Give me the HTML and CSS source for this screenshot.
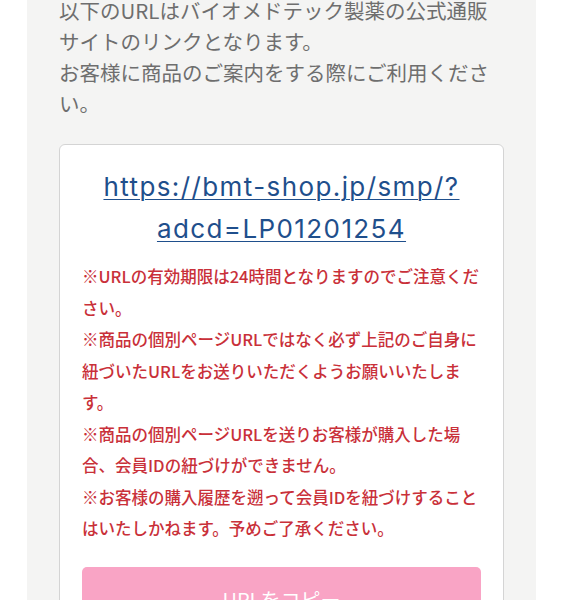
FILE: index.html
```html
<!DOCTYPE html>
<html lang="ja">
<head>
    <meta charset="UTF-8">
    <meta name="viewport" content="width=device-width, initial-scale=1.0">
    <title>URLのご案内</title>
    <link rel="stylesheet" href="styles.css">
</head>
<body>

<div class="panel">
    <div class="intro">
        <p>以下のURLはバイオメドテック製薬の公式通販サイトのリンクとなります。</p>
        <p>お客様に商品のご案内をする際にご利用ください。</p>
    </div>
    <div class="tarjeta">
        <a class="enlace" href="https://bmt-shop.jp/smp/?adcd=LP01201254">https://bmt-shop.jp/smp/?adcd=LP01201254</a>
        <div class="avisos">
            <p>※URLの有効期限は24時間となりますのでご注意ください。</p>
            <p>※商品の個別ページURLではなく必ず上記のご自身に紐づいたURLをお送りいただくようお願いいたします。</p>
            <p>※商品の個別ページURLを送りお客様が購入した場合、会員IDの紐づけができません。</p>
            <p>※お客様の購入履歴を遡って会員IDを紐づけすることはいたしかねます。予めご了承ください。</p>
        </div>
        <button class="boton-copiar" type="button">URLをコピー</button>
    </div>
</div>

</body>
</html>
```

FILE: styles.css
```css
body {
    margin: 0;
    background-color: #ffffff;
    font-family: "Noto Sans CJK JP", "Noto Sans", sans-serif;
}
.panel {
    background-color: #f4f4f3;
    margin: -5px 27px 0 27px;
    padding: 0 32px 40px 32px;
}
.intro p {
    margin: 0;
    font-size: 20.5px;
    line-height: 31px;
    color: #6e6e6e;
}
.tarjeta {
    margin-top: 25px;
    background-color: #ffffff;
    border: 1px solid #d4d4d4;
    border-radius: 6px;
    padding: 21px 22px 30px 22px;
}
.enlace {
    display: block;
    text-align: center;
    font-family: "Inter", "Noto Sans", sans-serif;
    font-size: 26px;
    letter-spacing: 1.4px;
    line-height: 41.5px;
    color: #1f4f8c;
    text-decoration: underline;
    text-decoration-thickness: 1px;
    text-underline-offset: 3px;
}
.avisos {
    margin-top: 12px;
}
.avisos p {
    margin: 0;
    font-size: 16.5px;
    line-height: 31.5px;
    font-weight: 500;
    color: #c93039;
}
.boton-copiar {
    display: block;
    width: 100%;
    margin-top: 22px;
    padding: 18px 0;
    border: none;
    border-radius: 5px;
    background-color: #f9a4c5;
    color: #ffffff;
    font-family: "Noto Sans CJK JP", sans-serif;
    font-size: 20px;
}
```
